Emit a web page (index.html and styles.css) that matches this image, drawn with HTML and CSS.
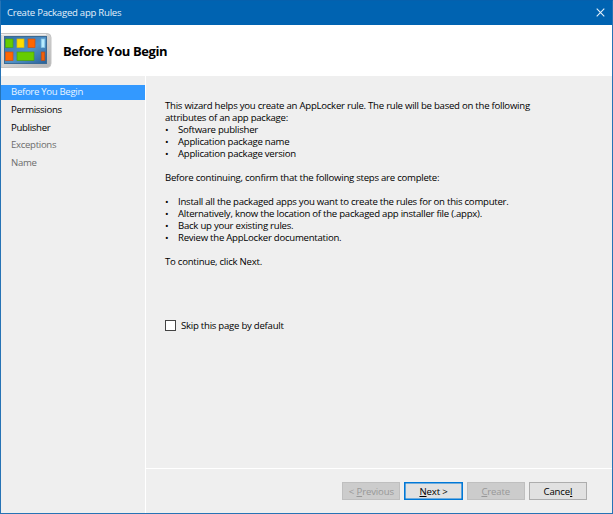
FILE: index.html
```html
<!DOCTYPE html>
<html lang="en">
<head>
<meta charset="utf-8">
<title>Create Packaged app Rules</title>
<link rel="stylesheet" href="styles.css">
</head>
<body>
<div class="window">
  <header class="titlebar">
    <span class="title">Create Packaged app Rules</span>
    <svg class="close" width="9" height="9" viewBox="0 0 9 9"><path d="M.7.7l7.6 7.6M8.3.7L.7 8.3" fill="none" stroke="#e4f0fa" stroke-width="1.1"/></svg>
  </header>
  <div class="banner">
    <svg class="logo" width="51" height="38" viewBox="0 0 51 38">
      <defs>
        <linearGradient id="frame" x1="0" y1="0" x2="1" y2="1"><stop offset="0" stop-color="#e0e0e0"/><stop offset=".5" stop-color="#d2d2d2"/><stop offset="1" stop-color="#b4b4b4"/></linearGradient>
        <linearGradient id="screen" x1="0" y1="0" x2="1" y2="1"><stop offset="0" stop-color="#326fa8"/><stop offset=".55" stop-color="#5091c7"/><stop offset="1" stop-color="#286199"/></linearGradient>
      </defs>
      <path d="M0 1.5h46q4 0 4 4v26q0 4-4 4H0z" fill="url(#frame)" stroke="#c4c4c4"/>
      <path d="M0 2.5h45" stroke="#f0f0f0"/>
      <rect x="3.5" y="4.5" width="42" height="27" fill="url(#screen)" stroke="#396a94"/>
      <g stroke-width=".7">
        <rect x="4.5" y="7" width="7.5" height="8.5" fill="#66cc00" stroke="#4ba00c"/>
        <rect x="16" y="7" width="7" height="8.5" fill="#ffdd00" stroke="#d9b710"/>
        <rect x="27" y="7" width="7" height="8.5" fill="#ff6600" stroke="#d05010"/>
        <rect x="40.2" y="7" width="3.6" height="8.5" fill="#b8ecff" stroke="#83c4e3"/>
        <rect x="4.5" y="20" width="7.5" height="8.5" fill="#ff6600" stroke="#d05010"/>
        <rect x="16" y="20" width="17" height="8.5" fill="#66cc00" stroke="#4ba00c"/>
        <rect x="40.2" y="20" width="3.6" height="8.5" fill="#f26008" stroke="#b84d18"/>
      </g>
    </svg>
    <h1>Before You Begin</h1>
  </div>
  <div class="body">
    <nav class="steps">
      <div class="step selected"><span>Before You Begin</span></div>
      <div class="step"><span>Permissions</span></div>
      <div class="step"><span>Publisher</span></div>
      <div class="step pending"><span>Exceptions</span></div>
      <div class="step pending"><span>Name</span></div>
    </nav>
    <div class="main">
      <main class="content">
        <p>This wizard helps you create an AppLocker rule. The rule will be based on the following<br>attributes of an app package:</p>
        <ul>
          <li>Software publisher</li>
          <li>Application package name</li>
          <li>Application package version</li>
        </ul>
        <p class="gap">Before continuing, confirm that the following steps are complete:</p>
        <ul class="gap">
          <li>Install all the packaged apps you want to create the rules for on this computer.</li>
          <li>Alternatively, know the location of the packaged app installer file (.appx).</li>
          <li>Back up your existing rules.</li>
          <li>Review the AppLocker documentation.</li>
        </ul>
        <p class="gap">To continue, click Next.</p>
        <div class="skip"><span class="box"></span><span>Skip this page by default</span></div>
      </main>
      <footer class="buttons">
        <div class="button disabled"><span>&lt; <u>P</u>revious</span></div>
        <div class="button primary"><span><u>N</u>ext &gt;</span></div>
        <div class="button disabled"><span><u>C</u>reate</span></div>
        <div class="button"><span>Cance<u>l</u></span></div>
      </footer>
    </div>
  </div>
</div>
</body>
</html>
```
FILE: styles.css
```css
* { box-sizing: border-box; }
body {
  margin: 0;
  font: 9.6px/12px "Open Sans", "Noto Sans", sans-serif;
  letter-spacing: -.25px;
  color: #000;
}
p, ul, h1 { margin: 0; padding: 0; }
.window {
  width: 613px;
  height: 514px;
  display: flex;
  flex-direction: column;
  background: #efefef;
  border: 1px solid #2673b5;
  border-top-color: #0560ad;
}
.titlebar {
  height: 24px;
  flex: none;
  display: flex;
  align-items: center;
  justify-content: space-between;
  padding: 0 7.5px 1px 6px;
  background: #0063b1;
  color: #e4f0fa;
}
.title { letter-spacing: -.26px; }
.banner {
  height: 51px;
  flex: none;
  display: flex;
  align-items: center;
  background: #fff;
}
.logo { flex: none; }
h1 {
  margin-left: 11px;
  font-size: 13px;
  line-height: 18px;
  letter-spacing: -.42px;
  color: #000;
}
.body { flex: 1; display: flex; min-height: 0; }
.steps {
  width: 145px;
  padding-top: 9px;
  border-right: 1px solid #fff;
  letter-spacing: -.31px;
}
.step {
  height: 15px;
  margin-bottom: 2.8px;
  padding-left: 10px;
  line-height: 14px;
}
.selected { background: #3399ff; color: #e8f4ff; }
.pending { color: #6d6d6d; }
.main { flex: 1; display: flex; flex-direction: column; }
.content { flex: 1; padding: 24px 0 0 19px; white-space: nowrap; }
.gap { margin-top: 12px; }
ul { list-style: none; }
li { display: flex; }
li::before { content: "•"; width: 13px; flex: none; }
.skip {
  display: flex;
  align-items: flex-start;
  margin-top: 52px;
}
.box {
  width: 11px;
  height: 11px;
  margin-right: 5px;
  border: 1px solid #444;
  background: #fff;
}
.buttons {
  height: 45px;
  display: flex;
  justify-content: flex-end;
  gap: 4px;
  padding: 13px 25px 0 0;
  border-top: 1px solid #fff;
}
.button {
  width: 58.2px;
  height: 18px;
  border: 1px solid #adadad;
  background: #e1e1e1;
  line-height: 17px;
  letter-spacing: -.15px;
  text-align: center;
}
.disabled { background: #ccc; border-color: #bfbfbf; color: #989898; }
.primary { border-color: #0078d7; box-shadow: inset 0 0 0 .6px #0078d7; }
u { text-underline-offset: 1px; text-decoration-thickness: 1px; }
```
